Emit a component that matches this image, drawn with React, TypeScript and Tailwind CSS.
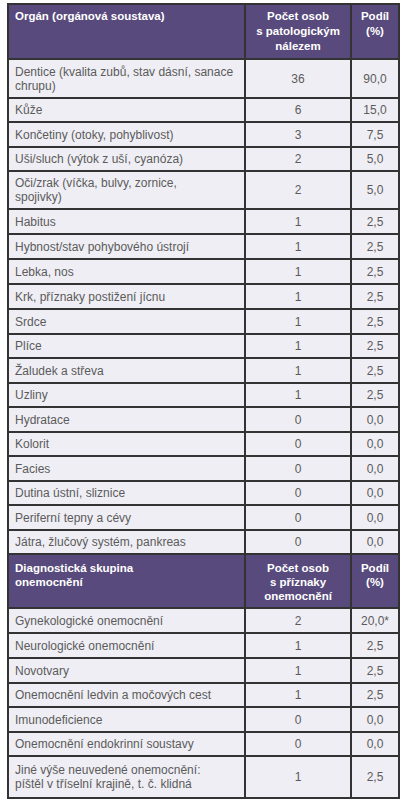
type Row = { label: string[]; count: string; share: string; h: string };

const organs: Row[] = [
  { label: ['Dentice (kvalita zubů, stav dásní, sanace', 'chrupu)'], count: '36', share: '90,0', h: 'h-[39px]' },
  { label: ['Kůže'], count: '6', share: '15,0', h: 'h-[24px]' },
  { label: ['Končetiny (otoky, pohyblivost)'], count: '3', share: '7,5', h: 'h-[25px]' },
  { label: ['Uši/sluch (výtok z uší, cyanóza)'], count: '2', share: '5,0', h: 'h-[24px]' },
  { label: ['Oči/zrak (víčka, bulvy, zornice,', 'spojivky)'], count: '2', share: '5,0', h: 'h-[38px]' },
  { label: ['Habitus'], count: '1', share: '2,5', h: 'h-[25px]' },
  { label: ['Hybnost/stav pohybového ústrojí'], count: '1', share: '2,5', h: 'h-[25px]' },
  { label: ['Lebka, nos'], count: '1', share: '2,5', h: 'h-[25px]' },
  { label: ['Krk, příznaky postižení jícnu'], count: '1', share: '2,5', h: 'h-[25px]' },
  { label: ['Srdce'], count: '1', share: '2,5', h: 'h-[25px]' },
  { label: ['Plíce'], count: '1', share: '2,5', h: 'h-[24px]' },
  { label: ['Žaludek a střeva'], count: '1', share: '2,5', h: 'h-[25px]' },
  { label: ['Uzliny'], count: '1', share: '2,5', h: 'h-[24px]' },
  { label: ['Hydratace'], count: '0', share: '0,0', h: 'h-[25px]' },
  { label: ['Kolorit'], count: '0', share: '0,0', h: 'h-[24px]' },
  { label: ['Facies'], count: '0', share: '0,0', h: 'h-[25px]' },
  { label: ['Dutina ústní, sliznice'], count: '0', share: '0,0', h: 'h-[24px]' },
  { label: ['Periferní tepny a cévy'], count: '0', share: '0,0', h: 'h-[25px]' },
  { label: ['Játra, žlučový systém, pankreas'], count: '0', share: '0,0', h: 'h-[24px]' },
];

const diagnoses: Row[] = [
  { label: ['Gynekologické onemocnění'], count: '2', share: '20,0*', h: 'h-[25px]' },
  { label: ['Neurologické onemocnění'], count: '1', share: '2,5', h: 'h-[25px]' },
  { label: ['Novotvary'], count: '1', share: '2,5', h: 'h-[25px]' },
  { label: ['Onemocnění ledvin a močových cest'], count: '1', share: '2,5', h: 'h-[24px]' },
  { label: ['Imunodeficience'], count: '0', share: '0,0', h: 'h-[25px]' },
  { label: ['Onemocnění endokrinní soustavy'], count: '0', share: '0,0', h: 'h-[24px]' },
  { label: ['Jiné výše neuvedené onemocnění:', 'píštěl v tříselní krajině, t. č. klidná'], count: '1', share: '2,5', h: 'h-[42px]' },
];

const cell = 'border-2 border-[#333333]';

const HeaderRow = ({ title, count, h, pt, lh }: { title: string[]; count: string[]; h: string; pt: string; lh: string }) => (
  <tr className={`${h} ${lh} bg-[#584a7c] text-white font-bold text-[11.5px]`}>
    <td className={`${cell} ${pt} pl-[6px] align-top`}>
      {title.map((t, i) => <div key={i}>{t}</div>)}
    </td>
    <td className={`${cell} ${pt} align-top text-center`}>
      {count.map((t, i) => <div key={i}>{t}</div>)}
    </td>
    <td className={`${cell} ${pt} align-top text-center`}>
      <div>Podíl</div>
      <div>(%)</div>
    </td>
  </tr>
);

const DataRow = ({ row }: { row: Row }) => (
  <tr className={`${row.h} bg-[#efeef4] text-[#5b5b5b] text-[12px] leading-[14px]`}>
    <td className={`${cell} pl-[6px] align-middle whitespace-nowrap`}>
      {row.label.map((t, i) => <div key={i}>{t}</div>)}
    </td>
    <td className={`${cell} text-center align-middle`}>{row.count}</td>
    <td className={`${cell} text-center align-middle`}>{row.share}</td>
  </tr>
);

export default function App() {
  return (
    <div className="w-[406px] h-[800px] bg-white pt-[3px] pl-[7px] font-['Liberation_Sans',Arial,sans-serif]">
      <table className="w-[391px] table-fixed border-collapse">
        <colgroup>
          <col className="w-[237px]" />
          <col className="w-[106px]" />
          <col className="w-[48px]" />
        </colgroup>
        <tbody>
          <HeaderRow
            title={['Orgán (orgánová soustava)']}
            count={['Počet osob', 's patologickým', 'nálezem']}
            h="h-[55px]"
            pt="pt-[4px]"
            lh="leading-[15px]"
          />
          {organs.map((r, i) => <DataRow key={i} row={r} />)}
          <HeaderRow
            title={['Diagnostická skupina', 'onemocnění']}
            count={['Počet osob', 's příznaky', 'onemocnění']}
            h="h-[54px]"
            pt="pt-[6px]"
            lh="leading-[14px]"
          />
          {diagnoses.map((r, i) => <DataRow key={i} row={r} />)}
        </tbody>
      </table>
    </div>
  );
}
